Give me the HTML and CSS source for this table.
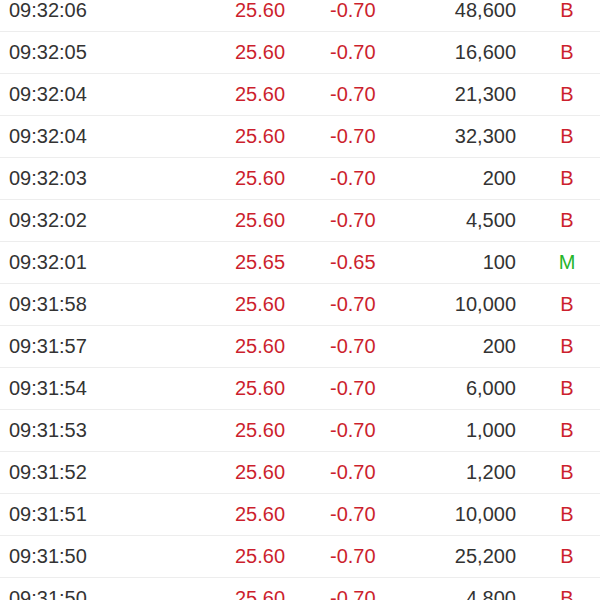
FILE: index.html
```html
<!DOCTYPE html>
<html lang="zh">
<head>
    <meta charset="UTF-8">
    <meta name="viewport" content="width=device-width, initial-scale=1.0">
    <title>成交明細</title>
    <link rel="stylesheet" href="styles.css">
</head>
<body>
    <!-- 逐筆成交 -->
    <div class="lista-ticks">
        <div class="tick"><span class="hora">09:32:06</span><span class="precio rojo">25.60</span><span class="cambio rojo">-0.70</span><span class="volumen">48,600</span><span class="lado rojo">B</span></div>
        <div class="tick"><span class="hora">09:32:05</span><span class="precio rojo">25.60</span><span class="cambio rojo">-0.70</span><span class="volumen">16,600</span><span class="lado rojo">B</span></div>
        <div class="tick"><span class="hora">09:32:04</span><span class="precio rojo">25.60</span><span class="cambio rojo">-0.70</span><span class="volumen">21,300</span><span class="lado rojo">B</span></div>
        <div class="tick"><span class="hora">09:32:04</span><span class="precio rojo">25.60</span><span class="cambio rojo">-0.70</span><span class="volumen">32,300</span><span class="lado rojo">B</span></div>
        <div class="tick"><span class="hora">09:32:03</span><span class="precio rojo">25.60</span><span class="cambio rojo">-0.70</span><span class="volumen">200</span><span class="lado rojo">B</span></div>
        <div class="tick"><span class="hora">09:32:02</span><span class="precio rojo">25.60</span><span class="cambio rojo">-0.70</span><span class="volumen">4,500</span><span class="lado rojo">B</span></div>
        <div class="tick"><span class="hora">09:32:01</span><span class="precio rojo">25.65</span><span class="cambio rojo">-0.65</span><span class="volumen">100</span><span class="lado verde">M</span></div>
        <div class="tick"><span class="hora">09:31:58</span><span class="precio rojo">25.60</span><span class="cambio rojo">-0.70</span><span class="volumen">10,000</span><span class="lado rojo">B</span></div>
        <div class="tick"><span class="hora">09:31:57</span><span class="precio rojo">25.60</span><span class="cambio rojo">-0.70</span><span class="volumen">200</span><span class="lado rojo">B</span></div>
        <div class="tick"><span class="hora">09:31:54</span><span class="precio rojo">25.60</span><span class="cambio rojo">-0.70</span><span class="volumen">6,000</span><span class="lado rojo">B</span></div>
        <div class="tick"><span class="hora">09:31:53</span><span class="precio rojo">25.60</span><span class="cambio rojo">-0.70</span><span class="volumen">1,000</span><span class="lado rojo">B</span></div>
        <div class="tick"><span class="hora">09:31:52</span><span class="precio rojo">25.60</span><span class="cambio rojo">-0.70</span><span class="volumen">1,200</span><span class="lado rojo">B</span></div>
        <div class="tick"><span class="hora">09:31:51</span><span class="precio rojo">25.60</span><span class="cambio rojo">-0.70</span><span class="volumen">10,000</span><span class="lado rojo">B</span></div>
        <div class="tick"><span class="hora">09:31:50</span><span class="precio rojo">25.60</span><span class="cambio rojo">-0.70</span><span class="volumen">25,200</span><span class="lado rojo">B</span></div>
        <div class="tick"><span class="hora">09:31:50</span><span class="precio rojo">25.60</span><span class="cambio rojo">-0.70</span><span class="volumen">4,800</span><span class="lado rojo">B</span></div>
    </div>
</body>
</html>
```

FILE: styles.css
```css
body {
    margin: 0;
    background: #ffffff;
    font-family: 'Liberation Sans', Arial, sans-serif;
    color: #333333;
    overflow: hidden;
}

/* Lista de ticks */
.lista-ticks {
    margin-top: -10px;
}

.tick {
    display: grid;
    grid-template-columns: 226px 95px 100px 86px 1fr;
    padding-left: 9px;
    height: 41px;
    line-height: 41px;
    font-size: 20px;
    border-bottom: 1px solid #ededed;
}

.volumen {
    text-align: right;
}

.lado {
    padding-left: 18px;
    text-align: center;
}

.rojo {
    color: #cc1f2e;
}

.verde {
    color: #25b52a;
}
```
